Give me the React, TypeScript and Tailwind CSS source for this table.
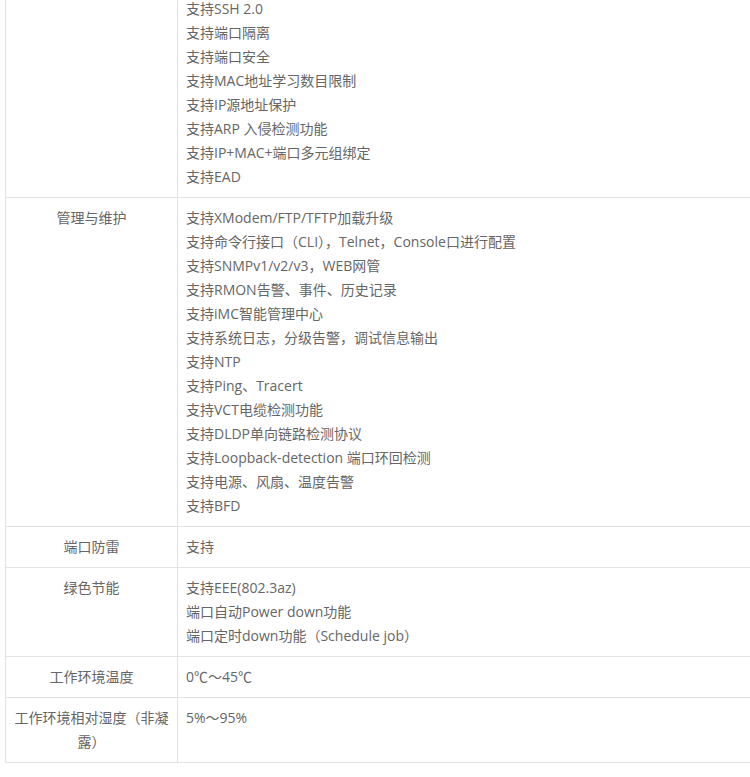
const rows: { label: string; items: string[] }[] = [
  {
    label: "",
    items: [
      "支持SSH 2.0",
      "支持端口隔离",
      "支持端口安全",
      "支持MAC地址学习数目限制",
      "支持IP源地址保护",
      "支持ARP 入侵检测功能",
      "支持IP+MAC+端口多元组绑定",
      "支持EAD",
    ],
  },
  {
    label: "管理与维护",
    items: [
      "支持XModem/FTP/TFTP加载升级",
      "支持命令行接口（CLI），Telnet，Console口进行配置",
      "支持SNMPv1/v2/v3，WEB网管",
      "支持RMON告警、事件、历史记录",
      "支持iMC智能管理中心",
      "支持系统日志，分级告警，调试信息输出",
      "支持NTP",
      "支持Ping、Tracert",
      "支持VCT电缆检测功能",
      "支持DLDP单向链路检测协议",
      "支持Loopback-detection 端口环回检测",
      "支持电源、风扇、温度告警",
      "支持BFD",
    ],
  },
  { label: "端口防雷", items: ["支持"] },
  {
    label: "绿色节能",
    items: [
      "支持EEE(802.3az)",
      "端口自动Power down功能",
      "端口定时down功能（Schedule job）",
    ],
  },
  { label: "工作环境温度", items: ["0℃～45℃"] },
  { label: "工作环境相对湿度（非凝露）", items: ["5%～95%"] },
];

const SpecRow = ({ label, items }: { label: string; items: string[] }) => {
  return (
    <div className="flex border-b border-[#e3e3e3]">
      <div className="w-[172px] shrink-0 border-r border-[#e3e3e3] px-2 py-2 text-center">
        {label}
      </div>
      <div className="flex-1 px-2 py-2">
        {items.map((item) => (
          <p key={item}>{item}</p>
        ))}
      </div>
    </div>
  );
};

export default function App() {
  return (
    <div className="h-[777px] w-[750px] overflow-hidden bg-white font-['Open_Sans','Noto_Sans_CJK_SC',sans-serif] text-[14px] leading-6 text-[#666]">
      <div className="ml-[5px] mt-[-12px] w-[820px] border-l border-t border-[#e3e3e3]">
        {rows.map((row, i) => (
          <SpecRow key={i} label={row.label} items={row.items} />
        ))}
      </div>
    </div>
  );
}
